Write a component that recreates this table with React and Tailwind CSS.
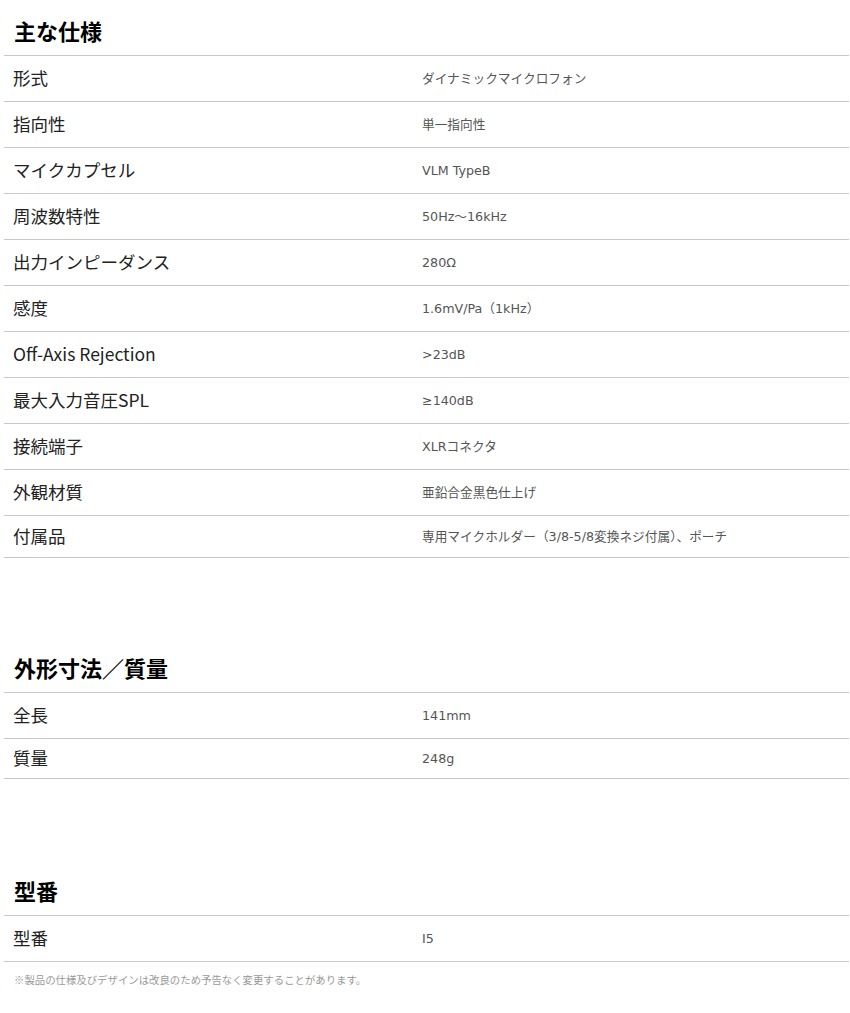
const font = { fontFamily: '"Noto Sans CJK JP", "Noto Sans", sans-serif' };
const valueFont = { fontFamily: '"DejaVu Sans", "Noto Sans CJK JP", sans-serif' };

const specs = [
  ['形式', 'ダイナミックマイクロフォン'],
  ['指向性', '単一指向性'],
  ['マイクカプセル', 'VLM TypeB'],
  ['周波数特性', '50Hz～16kHz'],
  ['出力インピーダンス', '280Ω'],
  ['感度', '1.6mV/Pa（1kHz）'],
  ['Off-Axis Rejection', '>23dB'],
  ['最大入力音圧SPL', '≥140dB'],
  ['接続端子', 'XLRコネクタ'],
  ['外観材質', '亜鉛合金黒色仕上げ'],
  ['付属品', '専用マイクホルダー（3/8-5/8変換ネジ付属）、ポーチ', 'h-[42px]'],
];

const dims = [
  ['全長', '141mm'],
  ['質量', '248g', 'h-[40px]'],
];

const model = [['型番', 'I5']];

const Section = ({ title, rows, className = '' }) => (
  <div className={className}>
    <div className="h-[56px] flex items-center pt-[4px] pl-[10px] border-b border-[#c8c8c8]">
      <h2 className="text-[22px] font-bold text-black leading-none">{title}</h2>
    </div>
    {rows.map(([label, value, h]) => (
      <div key={label} className={`${h || 'h-[46px]'} flex items-center border-b border-[#c8c8c8]`}>
        <div className="w-[418px] pl-[9px] text-[17.5px] text-[#222]">{label}</div>
        <div className="flex-1 text-[12.7px] text-[#555]" style={valueFont}>{value}</div>
      </div>
    ))}
  </div>
);

export default function App() {
  return (
    <div className="min-h-screen bg-white px-[4px] pr-[1px]" style={font}>
      <Section title="主な仕様" rows={specs} />
      <Section title="外形寸法／質量" rows={dims} className="mt-[79px]" />
      <Section title="型番" rows={model} className="mt-[81px]" />
      <p className="pl-[10px] pt-[10px] text-[10.4px] text-[#999]">※製品の仕様及びデザインは改良のため予告なく変更することがあります。</p>
    </div>
  );
}
